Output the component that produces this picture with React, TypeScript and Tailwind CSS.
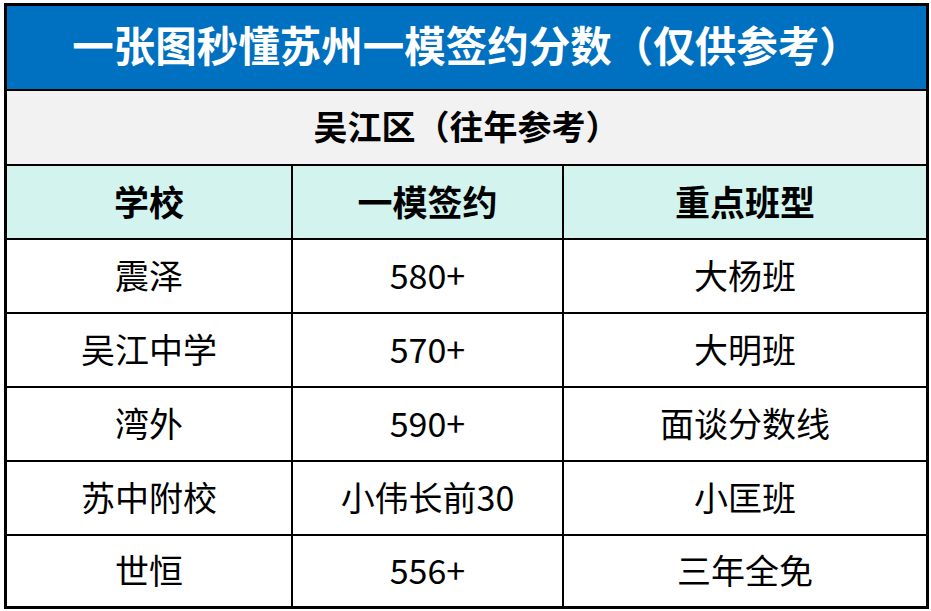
const ROWS = [
  ["震泽", "580+", "大杨班"],
  ["吴江中学", "570+", "大明班"],
  ["湾外", "590+", "面谈分数线"],
  ["苏中附校", "小伟长前30", "小匡班"],
  ["世恒", "556+", "三年全免"],
]

const FONT = "font-['Microsoft_YaHei','Noto_Sans_CJK_SC',sans-serif]"

function Row({ cells, className }: { cells: string[]; className: string }) {
  return (
    <div className={`flex ${className}`}>
      <div className="w-[286px] shrink-0 flex items-center justify-center border-r-2 border-black pb-[3px]">{cells[0]}</div>
      <div className="w-[271px] shrink-0 flex items-center justify-center border-r-2 border-black pb-[3px]">{cells[1]}</div>
      <div className="flex-1 flex items-center justify-center pb-[3px]">{cells[2]}</div>
    </div>
  )
}

export default function App() {
  return (
    <div className={`w-[931px] h-[611px] bg-white pt-[3px] pl-[4px] ${FONT}`}>
      <div className="w-[925px] h-[606px] border-[3px] border-black flex flex-col text-black">
        <div className="h-[85px] shrink-0 bg-[#0070c0] border-b-2 border-black flex items-center justify-center pb-[5px] text-white font-bold text-[41.5px] leading-none">
          一张图秒懂苏州一模签约分数（仅供参考）
        </div>
        <div className="h-[75px] shrink-0 bg-[#f2f2f2] border-b-2 border-black flex items-center justify-center pb-[3px] font-bold text-[34px] leading-none">
          吴江区（往年参考）
        </div>
        <Row cells={["学校", "一模签约", "重点班型"]} className="h-[74px] shrink-0 bg-[#d3f4ee] border-b-2 border-black font-bold text-[35px] leading-none" />
        {ROWS.map((r, i) => (
          <Row
            key={r[0]}
            cells={r}
            className={`${i < ROWS.length - 1 ? "h-[74px] border-b-2 border-black" : "flex-1"} shrink-0 text-[34px] leading-none`}
          />
        ))}
      </div>
    </div>
  )
}
